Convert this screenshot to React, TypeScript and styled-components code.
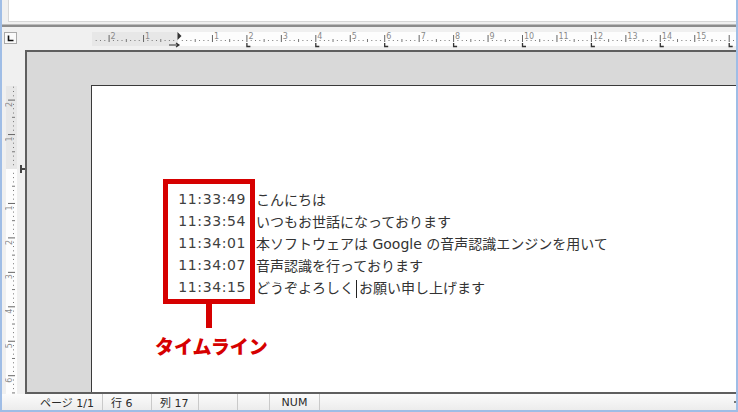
import styled, { createGlobalStyle } from "styled-components";

const GlobalStyle = createGlobalStyle`
  html, body {
    margin: 0;
    padding: 0;
    background: #f0f0f0;
  }
  * {
    box-sizing: border-box;
  }
`;

const CM = 34.45;

const Window = styled.div`
  width: 738px;
  height: 412px;
  display: flex;
  flex-direction: column;
  background: #f0f0f0;
  border-left: 2px solid #9fbde6;
  border-right: 2px solid #9fbde6;
  border-bottom: 2px solid #9fbde6;
  overflow: hidden;
  font-family: "DejaVu Sans", "Noto Sans CJK JP", sans-serif;
`;

const TopField = styled.div`
  height: 22px;
  margin-left: 6px;
  background: #ffffff;
  border-left: 1px solid #d6d6d6;
  border-bottom: 1px solid #d6d6d6;
`;

const Divider = styled.div`
  height: 3px;
  margin-top: 2px;
  border-top: 1px solid #bdbdbd;
  border-bottom: 2px solid #8c8c8c;
`;

const RulerBar = styled.div`
  height: 23px;
  display: flex;
  align-items: flex-start;
`;

const TabButton = styled.div`
  width: 13px;
  height: 12px;
  margin: 5px 0 0 2px;
  border: 1px solid #a9a9a9;
  background: #fafafa;
  display: flex;
  align-items: center;
  justify-content: center;
`;

const HRulerBox = styled.div`
  margin: 4px 0 0 75px;
  height: 17px;
  flex: 1;
`;

const Workspace = styled.div`
  flex: 1;
  display: flex;
  min-height: 0;
`;

const VRulerColumn = styled.div`
  width: 23px;
  padding: 36px 0 0 3px;
`;

const DocFrame = styled.div`
  flex: 1;
  display: flex;
  flex-direction: column;
  padding: 33px 0 0 64px;
  background: #d9d9d9;
  border-top: 2px solid #5f5f5f;
  border-left: 2px solid #5f5f5f;
  border-bottom: 2px solid #5f5f5f;
  overflow: hidden;
`;

const Page = styled.div`
  flex: 1;
  position: relative;
  background: #ffffff;
  border-top: 1px solid #3a3a3a;
  border-left: 1px solid #3a3a3a;
`;

const Transcript = styled.div`
  display: flex;
  flex-direction: column;
  padding: 102px 0 0 77px;
`;

const Row = styled.div`
  display: flex;
  align-items: center;
  height: 22px;
  gap: 10px;
`;

const Time = styled.span`
  width: 77px;
  text-align: right;
  font-family: "DejaVu Sans", sans-serif;
  font-size: 14px;
  letter-spacing: 0.6px;
  color: #404040;
  white-space: nowrap;
`;

const Utterance = styled.span`
  font-family: "DejaVu Sans", "Noto Sans CJK JP", sans-serif;
  font-size: 14px;
  color: #333333;
  white-space: nowrap;
`;

const Caret = styled.span`
  display: inline-block;
  width: 1px;
  height: 18px;
  margin: 0 2px 0 2px;
  background: #222222;
  vertical-align: middle;
`;

const Highlight = styled.div`
  position: absolute;
  left: 71px;
  top: 93px;
  width: 92px;
  height: 125px;
  border: 5px solid #d60000;
`;

const Stem = styled.div`
  position: absolute;
  left: 114px;
  top: 218px;
  width: 6px;
  height: 24px;
  background: #d60000;
`;

const Callout = styled.div`
  position: absolute;
  left: 63px;
  top: 250px;
  font-family: "Noto Sans CJK JP", sans-serif;
  font-size: 19px;
  line-height: 20px;
  font-weight: 900;
  color: #d60000;
  white-space: nowrap;
`;

const StatusBar = styled.div`
  height: 16px;
  display: flex;
  align-items: stretch;
  background: linear-gradient(#fbfbfb, #ececec);
  font-family: "DejaVu Sans", "Noto Sans CJK JP", sans-serif;
  font-size: 11px;
  color: #2a2a2a;
  position: relative;
`;

const StatusCell = styled.div<{ $width: number; $pad?: number; $center?: boolean }>`
  width: ${({ $width }) => `${$width}px`};
  padding-left: ${({ $pad }) => `${$pad ?? 0}px`};
  border-right: 1px solid #c9c9c9;
  display: flex;
  align-items: center;
  justify-content: ${({ $center }) => ($center ? "center" : "flex-start")};
  white-space: nowrap;
`;

const Grip = styled.div`
  position: absolute;
  right: 0;
  top: 7px;
  width: 2px;
  height: 2px;
  background: #777;
`;

const HRuler = () => {
  const width = 644;
  const origin = 86;
  const marks = [];
  for (let k = -24; k <= 17 * 8; k++) {
    const x = origin + (k * CM) / 8;
    if (x < 1 || x > width - 1) continue;
    if (k === 0) continue;
    if (k % 8 === 0) {
      marks.push(
        <g key={k}>
          <rect x={x - 0.5} y={4} width={1} height={7} fill="#666" />
          {x + 12 < width && (
            <text x={x + 1.5} y={8} fontSize={8} fill="#8a8a8a" fontFamily="DejaVu Sans, sans-serif">
              {Math.abs(k / 8)}
            </text>
          )}
        </g>
      );
    } else if (k % 4 === 0) {
      marks.push(<rect key={k} x={x - 0.5} y={8} width={1} height={3} fill="#777" />);
    } else {
      marks.push(<rect key={k} x={x - 0.5} y={9} width={1} height={1} fill="#777" />);
    }
  }
  const stops = [];
  for (let n = 2; n <= 16; n += 2) {
    const x = origin + n * CM;
    if (x > width) continue;
    stops.push(<path key={n} d={`M${x} 12 V15.5 H${x + 3.5}`} stroke="#333" strokeWidth={1.3} fill="none" />);
  }
  return (
    <svg width={width} height={17} viewBox={`0 0 ${width} 17`}>
      <rect x={0} y={1} width={origin} height={14} fill="#e7e7e7" />
      <rect x={origin} y={1} width={width - origin} height={14} fill="#fdfdfd" />
      {marks}
      {stops}
      <path d={`M${origin - 0.5} 1 L${origin + 3.5} 5 L${origin - 0.5} 9 Z`} fill="#333" />
      <path d={`M${origin - 9} 14 H${origin + 1} M${origin - 2} 12 L${origin + 1} 14 L${origin - 2} 16`} stroke="#333" strokeWidth={1.2} fill="none" />
    </svg>
  );
};

const VRuler = () => {
  const height = 310;
  const origin = 83;
  const marks = [];
  for (let k = -24; k <= 9 * 8; k++) {
    const y = origin + (k * CM) / 8;
    if (y < 1 || y > height - 1) continue;
    if (k === 0) continue;
    if (k % 8 === 0) {
      const n = Math.abs(k / 8);
      marks.push(
        <g key={k}>
          <rect x={3} y={y - 0.5} width={7} height={1} fill="#666" />
          <text
            x={0}
            y={0}
            fontSize={8}
            fill="#8a8a8a"
            fontFamily="DejaVu Sans, sans-serif"
            transform={`translate(7 ${y + 7}) rotate(-90)`}
          >
            {n}
          </text>
        </g>
      );
    } else if (k % 4 === 0) {
      marks.push(<rect key={k} x={7} y={y - 0.5} width={3} height={1} fill="#777" />);
    } else {
      marks.push(<rect key={k} x={8} y={y - 0.5} width={1} height={1} fill="#777" />);
    }
  }
  return (
    <svg width={20} height={height} viewBox={`0 0 20 ${height}`}>
      <rect x={1} y={0} width={11} height={origin} fill="#e7e7e7" />
      <rect x={1} y={origin} width={11} height={height - origin} fill="#fdfdfd" />
      {marks}
      <rect x={15} y={origin - 4} width={2} height={8} fill="#444" />
      <rect x={15} y={origin - 1} width={5} height={2} fill="#444" />
    </svg>
  );
};

const rows = [
  { time: "11:33:49", text: "こんにちは" },
  { time: "11:33:54", text: "いつもお世話になっております" },
  { time: "11:34:01", text: "本ソフトウェアは Google の音声認識エンジンを用いて" },
  { time: "11:34:07", text: "音声認識を行っております" }
];

export default function App() {
  return (
    <>
      <GlobalStyle />
      <Window>
        <TopField />
        <Divider />
        <RulerBar>
          <TabButton>
            <svg width={7} height={7} viewBox="0 0 7 7">
              <path d="M1.5 0.5 V5.5 H6.5" stroke="#111" strokeWidth={1.6} fill="none" />
            </svg>
          </TabButton>
          <HRulerBox>
            <HRuler />
          </HRulerBox>
        </RulerBar>
        <Workspace>
          <VRulerColumn>
            <VRuler />
          </VRulerColumn>
          <DocFrame>
            <Page>
              <Transcript>
                {rows.map((r) => (
                  <Row key={r.time}>
                    <Time>{r.time}</Time>
                    <Utterance>{r.text}</Utterance>
                  </Row>
                ))}
                <Row>
                  <Time>11:34:15</Time>
                  <Utterance>
                    どうぞよろしく
                    <Caret />
                    お願い申し上げます
                  </Utterance>
                </Row>
              </Transcript>
              <Highlight />
              <Stem />
              <Callout>タイムライン</Callout>
            </Page>
          </DocFrame>
        </Workspace>
        <StatusBar>
          <StatusCell $width={101} $pad={38}>ページ 1/1</StatusCell>
          <StatusCell $width={49} $pad={8}>行 6</StatusCell>
          <StatusCell $width={47} $pad={8}>列 17</StatusCell>
          <StatusCell $width={39} />
          <StatusCell $width={32} />
          <StatusCell $width={50} $center>NUM</StatusCell>
          <Grip />
        </StatusBar>
      </Window>
    </>
  );
}
